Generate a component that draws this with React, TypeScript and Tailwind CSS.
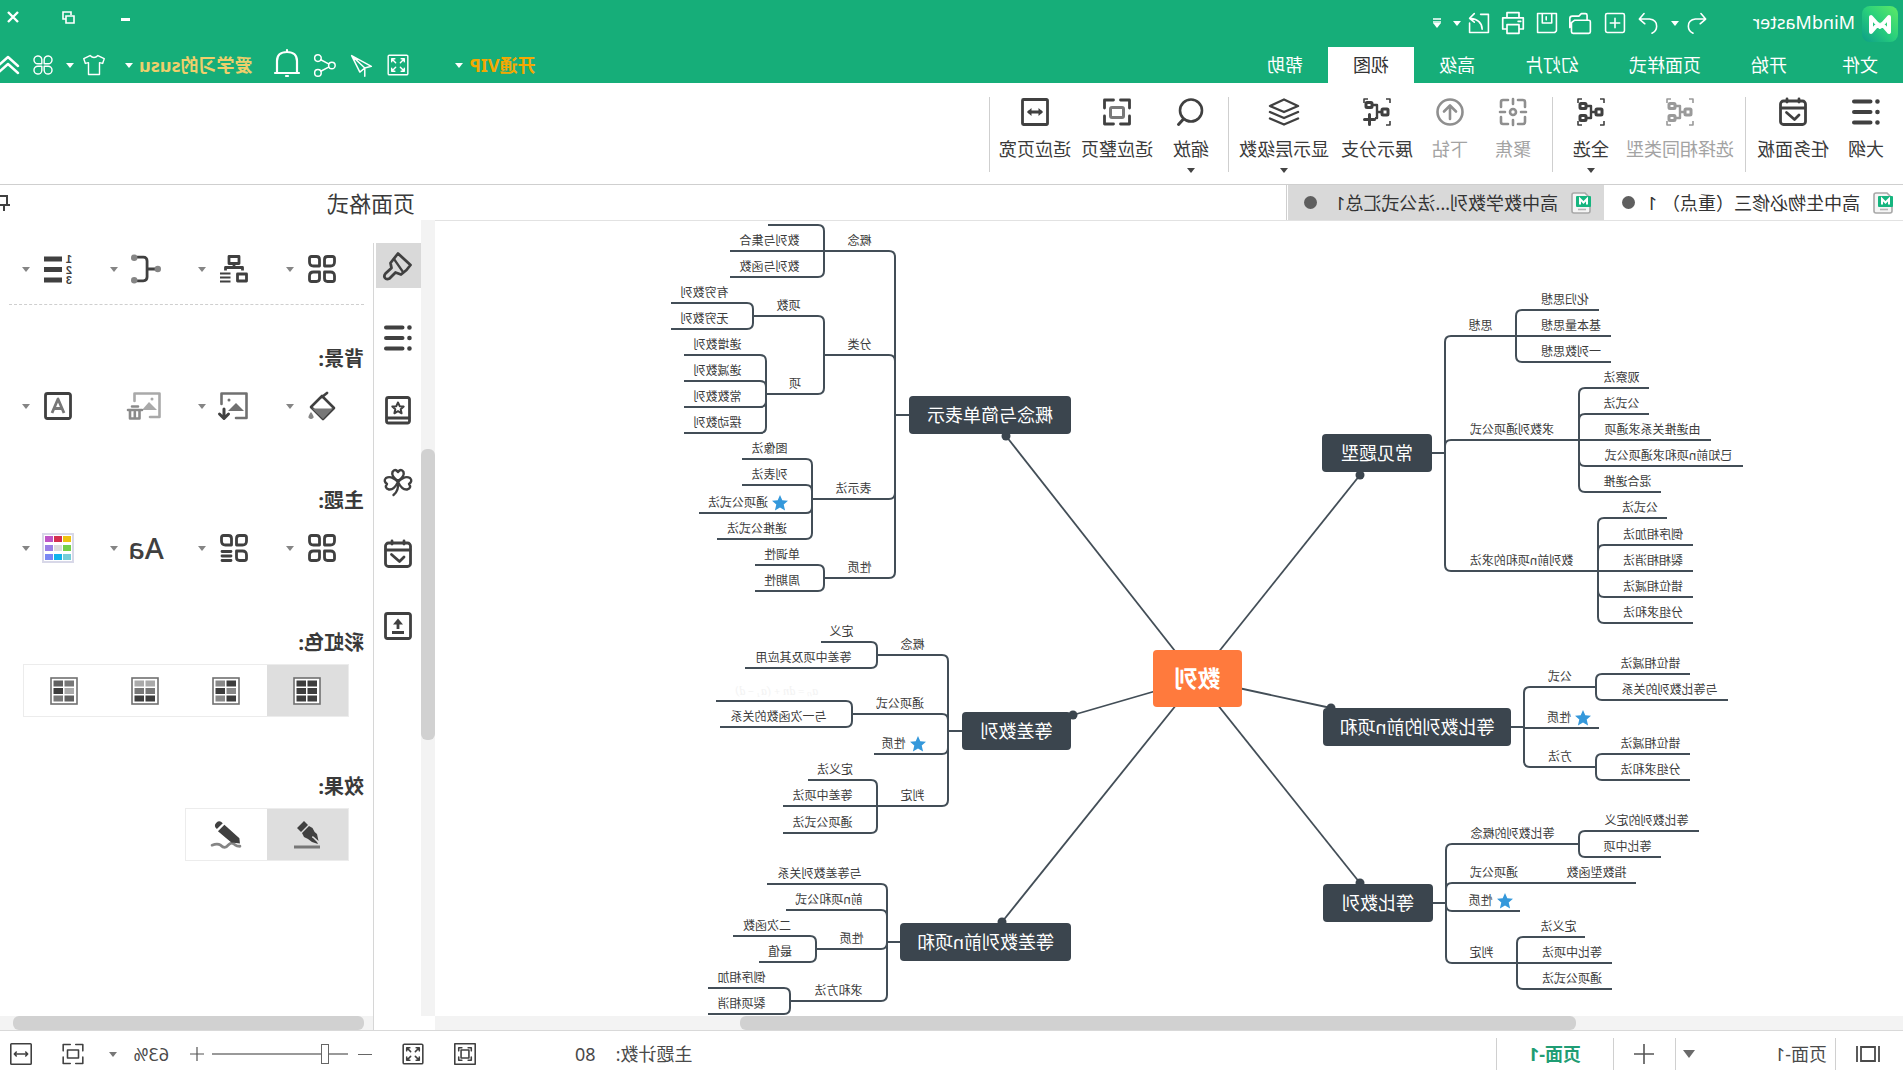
import type { ReactNode } from "react";

const DARK = "#404040";
const LINE = "#434e57";

type IconProps = { children: ReactNode; size?: number; color?: string; width?: number };

// every icon is drawn on a 28 x 28 grid
function Icon({ children, size = 28, color = DARK, width = 2.6 }: IconProps) {
  return (
    <svg
      width={size}
      height={size}
      viewBox="0 0 28 28"
      fill="none"
      stroke={color}
      strokeWidth={width}
      strokeLinecap="round"
      strokeLinejoin="round"
      className="shrink-0 overflow-visible"
      aria-hidden="true"
    >
      {children}
    </svg>
  );
}

function Caret({ className = "text-white" }: { className?: string }) {
  return (
    <svg width="8" height="5" viewBox="0 0 8 5" className={`shrink-0 ${className}`} aria-hidden="true">
      <path d="M0 0h8L4 5z" fill="currentColor" />
    </svg>
  );
}

function Star() {
  return (
    <svg width="16" height="16" viewBox="0 0 16 16" className="shrink-0" aria-hidden="true">
      <path d="M8 0l2.3 5.3 5.7.5-4.3 3.8 1.4 5.9L8 12.5l-5.1 3 1.4-5.9L0 5.8l5.7-.5z" fill="#3498db" />
    </svg>
  );
}

/* ---------- icons ---------- */

const outlineIcon = (
  <Icon width={4}>
    <path d="M9.5 3.5H26M9.5 14H26M9.5 24.5H26" />
    <path d="M2.5 3.5h.1M2.5 14h.1M2.5 24.5h.1" strokeWidth={4.5} />
  </Icon>
);

const taskIcon = (
  <Icon width={2.8}>
    <rect x="1.5" y="3" width="25" height="23.5" rx="3" />
    <path d="M2 10h24M8 1v3M20 1v3M8 17l4.5 4.5 8-7" />
  </Icon>
);

const brackets = <path d="M1 5V1h4M23 1h4v4M1 23v4h4M23 27h4v-4" strokeWidth={1.6} strokeLinecap="butt" />;

const treeIcon = (color: string) => (
  <Icon color={color} width={3}>
    {brackets}
    <rect x="3" y="11" width="6" height="6" rx="1" />
    <rect x="19" y="5.5" width="6" height="5" rx="1" />
    <rect x="19" y="17.5" width="6" height="5" rx="1" />
    <path d="M9 14h5M19 8h-5v12h5" strokeWidth={2.4} />
  </Icon>
);

const focusIcon = (
  <Icon color="#8f8f8f">
    <path d="M2 9V4q0-2 2-2h5M19 2h5q2 0 2 2v5M26 19v5q0 2-2 2h-5M9 26H4q-2 0-2-2v-5" />
    <path d="M14 1v5M14 22v5M1 14h5M22 14h5" />
    <circle cx="14" cy="14" r="3" />
  </Icon>
);

const drillIcon = (
  <Icon color="#8f8f8f">
    <circle cx="14" cy="14" r="12.5" />
    <path d="M14 21V8M8 13.5L14 7.5l6 6" />
  </Icon>
);

const branchIcon = (
  <Icon width={3}>
    <path d="M1 5V1h4M23 1h4v4M1 23v4h4" strokeWidth={1.6} strokeLinecap="butt" />
    <rect x="3" y="11" width="6" height="6" rx="1" />
    <rect x="19" y="4.5" width="6" height="5" rx="1" />
    <path d="M9 14h5M18 7h-4v13h1" strokeWidth={2.4} />
    <path d="M21.5 16.5v10M16.5 21.5h10" />
  </Icon>
);

const layersIcon = (
  <Icon width={2.4}>
    <path d="M14 1.5l14 6.500-14 6L0 8z" />
    <path d="M0 14l14 6 14-6M0 20.5l14 6 14-6" />
  </Icon>
);

const zoomIcon = (
  <Icon>
    <circle cx="14" cy="12.5" r="11" />
    <path d="M21.5 21l5 5.5" strokeWidth={3} />
  </Icon>
);

const corners = <path d="M1.5 10V2h9M17.5 2h9v8M26.5 18v8h-9M10.5 26h-9v-8" />;

const fitPageIcon = (
  <Icon width={2.8}>
    {corners}
    <rect x="7.5" y="9.5" width="13" height="10" rx="1.5" stroke="#7a7a7a" strokeWidth={3} />
  </Icon>
);

const fitWidthIcon = (
  <Icon width={2.8}>
    <rect x="1.5" y="1.5" width="25" height="25" rx="1" />
    <path d="M8 14h12" />
    <path d="M10.5 10v8L6 14zM17.5 10v8l4.500-4z" fill={DARK} stroke="none" />
  </Icon>
);

const petals = (last: ReactNode) => (
  <Icon width={2.8}>
    <path d="M3.5 1.5h5q3 0 3 3v6.5h-6q-4 0-4-4v-3.500q0-2 2-2z" />
    <path d="M24.5 1.5h-5q-3 0-3 3v6.5h6q4 0 4-4v-3.500q0-2-2-2z" />
    <path d="M3.5 26.5h5q3 0 3-3v-6.500h-6q-4 0-4 4v3.500q0 2 2 2z" />
    {last}
  </Icon>
);
const fourPetals = petals(<path d="M24.5 26.5h-5q-3 0-3-3v-6.500h6q4 0 4 4v3.500q0 2-2 2z" />);
const petalsList = petals(<path d="M17 17.5h9M17 22h9M17 26.5h9" />);

const layoutIcon = (
  <Icon width={2.8}>
    <rect x="9" y="1.5" width="10" height="7" />
    <path d="M14 9v4M5.5 15.5v-3h17v3" strokeLinecap="butt" />
    <rect x="1.5" y="19" width="9" height="7" />
    <path d="M17.5 18.5H28M17.5 22.5H28M17.5 26.5H28" strokeWidth={2.2} strokeLinecap="butt" />
  </Icon>
);

const connectorIcon = (
  <Icon size={30}>
    <path d="M4 14h9M22 3h-5.500q-3.500 0-3.500 3.500v15q0 3.500 3.500 3.500H22" />
    <g fill="#858585" stroke="none">
      <circle cx="3" cy="14" r="3" />
      <circle cx="25" cy="3.5" r="3" />
      <circle cx="25" cy="24.5" r="3" />
    </g>
  </Icon>
);

const numberedIcon = (
  <Icon width={5}>
    <path d="M10 4h18M10 14.5h18M10 25h18" strokeLinecap="butt" />
    <g fill={DARK} stroke="none" fontSize="11" fontWeight="700" fontFamily="Liberation Sans">
      <text x="0" y="8">1</text>
      <text x="0" y="18.5">2</text>
      <text x="0" y="29">3</text>
    </g>
  </Icon>
);

const bucketIcon = (
  <Icon width={2.6}>
    <path d="M2 16L14 4l11 11-12 12z" />
    <path d="M9 1l5 4" />
    <path d="M3 16.5h21L13 27z" fill="#777" stroke="none" />
    <path d="M25 20q-3 4-2.500 5.500 2.500 3 5 0Q28 24 25 20z" fill="#858585" stroke="none" />
  </Icon>
);

const pictureIcon = (
  <Icon width={2.6} color="#707070">
    <path d="M12 26H1.500V1.500h25V12" />
    <path d="M4 19l8-8 8 8z" fill="#707070" stroke="none" />
    <circle cx="19" cy="8" r="1.5" fill="#707070" stroke="none" />
    <path d="M24 17v9M19.5 22l4.500 4.500 4.500-4.500" stroke={DARK} strokeWidth={3} />
  </Icon>
);

const pictureDeleteIcon = (
  <Icon width={2.6} color="#a9a9a9">
    <path d="M10 25H0.500V1.500h25V9" />
    <path d="M3 18l8-8 7 8z" fill="#a9a9a9" stroke="none" />
    <circle cx="8" cy="7" r="1.5" fill="#a9a9a9" stroke="none" />
    <path d="M18 18h14M22 14.500h6M20.500 19v7.500h9.500V19M25.200 20v5" stroke="#8a8a8a" />
  </Icon>
);

const watermarkIcon = (
  <Icon width={2.8}>
    <rect x="1.5" y="1.5" width="25" height="25" rx="2" />
    <path d="M8 21l6-14 6 14M10 16.5h8" stroke="#777" strokeLinecap="butt" />
  </Icon>
);

const paletteColors = ["#efc210", "#d4304f", "#bf55c6", "#75cf49", "#dcdcdc", "#9a7fe6", "#74cdd8", "#10b4ec", "#7a88f4"];
const paletteIcon = (
  <svg width="32" height="30" viewBox="0 0 32 30" className="shrink-0" aria-hidden="true">
    <rect x="1" y="1" width="30" height="28" fill="#fff" stroke="#d8d8e8" strokeWidth="2" />
    {paletteColors.map((c, i) => (
      <rect key={c} x={3 + (i % 3) * 9} y={3 + Math.floor(i / 3) * 9} width="8" height="6" fill={c} />
    ))}
  </svg>
);

const brushIcon = (
  <Icon width={2.8}>
    <path d="M14 1.5L1.500 13l4 5 5.500 4.500 5.500-2 6 6q3 1.500 4.500-.5t-.5-4.500l-6-5.500 1-5z" />
    <path d="M18 7L9 20" strokeWidth={2.2} />
  </Icon>
);

const bookIcon = (
  <Icon width={2.8}>
    <rect x="2.5" y="1.5" width="23" height="25.5" rx="2" />
    <path d="M3 22h22" />
    <path d="M14 6.500l1.700 3.700 4 .4-3 2.700.9 4L14 15.200l-3.600 2.100.9-4-3-2.700 4-.4z" strokeWidth={2} />
  </Icon>
);

const cloverIcon = (
  <Icon width={2.4}>
    <path d="M14 13Q7 8 8.500 4 11 0 14 4q3-4 5.500 0Q21 8 14 13z" />
    <path d="M14 14Q10 22 5 21.500 0 20 3 16q-4-3-1-6 5-3 12 4z" />
    <path d="M14 14q4 8 9 7.500 5-1.500 2-5.500 4-3 1-6-5-3-12 4z" />
    <path d="M14 14q-1 9 4.500 13" />
  </Icon>
);

const exportIcon = (
  <Icon width={2.8}>
    <rect x="1.5" y="1.5" width="25" height="25" rx="2" />
    <path d="M8 20.5h12M14 17v-6" strokeLinecap="butt" />
    <path d="M9 12.500L14 6.500l5 6z" fill={DARK} stroke="none" />
  </Icon>
);

function GridIcon({ cells }: { cells: string[] }) {
  return (
    <svg width="28" height="28" viewBox="0 0 28 28" aria-hidden="true">
      <rect x="1" y="1" width="26" height="26" fill="#fff" stroke="#707070" strokeWidth="1.6" />
      {cells.map((c, i) => (
        <rect key={i} x={i % 2 ? 15 : 4} y={3.5 + Math.floor(i / 2) * 7.5} width="9.5" height="6" fill={c} />
      ))}
    </svg>
  );
}

const penIcon = (
  <Icon width={3}>
    <path d="M1 26h26" stroke="#777" strokeLinecap="butt" />
    <path d="M17 0l7 7-4 4-7-7zM12 5l7 7-2 4q-5 2-8 5l-6 2 1-2 4-4q1 0 1-1t-1.500-.500L2.500 20 4 13q3-2 4.500-6z" fill={DARK} stroke="none" />
  </Icon>
);

const pencilIcon = (
  <Icon size={30}>
    <path d="M1 24.500q3 0 4-1 4-4 7 0t7 0q3-2 8 0" stroke="#858585" />
    <path d="M17 3q3-3.500 6-.5t-.5 6zM15.500 4.500l6 6L9 21 1 22l.500-5z" fill={DARK} stroke="none" />
  </Icon>
);

const fullscreenIcon = (color: string, width: number) => (
  <Icon size={22} color={color} width={width}>
    <rect x="1.5" y="1.5" width="25" height="25" rx="1.5" />
    <path d="M6 10V6h4M6 6l5 5M18 6h4v4M22 6l-5 5M22 18v4h-4M22 22l-5-5M10 22H6v-4M6 22l5-5" />
  </Icon>
);

/* ---------- title bar ---------- */

const iconButton = "flex h-7 items-center justify-center";

function TitleBar() {
  return (
    <div className="flex h-[47px] items-start text-white">
      <div className="ml-[5px] mt-[6px] flex items-center">
        <svg width="36" height="36" viewBox="0 0 36 36" aria-hidden="true">
          <defs>
            <linearGradient id="logo" x1="0" y1="0" x2="1" y2="1">
              <stop offset="0" stopColor="#5eea66" />
              <stop offset="0.5" stopColor="#28cf7c" />
              <stop offset="1" stopColor="#0d9d88" />
            </linearGradient>
          </defs>
          <rect width="36" height="36" rx="8" fill="url(#logo)" />
          <path d="M9 26V11l9 10 9-10v15l-7-8M9 26l7-8" fill="none" stroke="#fff" strokeWidth="4" strokeLinecap="round" strokeLinejoin="round" />
        </svg>
        <span className="ml-[7px] mb-1 w-[105px] text-lg leading-7">MindMaster</span>
      </div>

      <div className="ml-[42px] mt-[9px] flex items-center">
        <button aria-label="撤销" className={iconButton}>
          <Icon size={22} color="#fff" width={2}>
            <path d="M9 2L3 9l7 6M3 9h13q9 1 9 9 0 6-6 9" />
          </Icon>
        </button>
        <button aria-label="撤销记录" className={`${iconButton} ml-[7px]`}><Caret /></button>
        <button aria-label="恢复" className={`${iconButton} ml-3`}>
          <Icon size={22} color="#fff" width={2}>
            <path d="M19 2l6 7-7 6M25 9H12q-9 1-9 9 0 6 6 9" />
          </Icon>
        </button>
        <button aria-label="新建" className={`${iconButton} ml-[11px]`}>
          <Icon size={22} color="#fff" width={2}>
            <rect x="2" y="2" width="24" height="24" rx="2" />
            <path d="M14 8v12M8 14h12" />
          </Icon>
        </button>
        <button aria-label="打开" className={`${iconButton} ml-3`}>
          <Icon size={23} color="#fff" width={2}>
            <path d="M2 24V12q0-2 2-2h17l4 3v11q0 2-2 2H4q-2 0-2-2zM6 10V4q0-2 2-2h5l3 3h8q3 0 3 3v11" />
          </Icon>
        </button>
        <button aria-label="保存" className={`${iconButton} ml-[11px]`}>
          <Icon size={22} color="#fff" width={2}>
            <path d="M2 2h24v24H4l-2-2zM8 2v12h12V2M15 6v4" />
          </Icon>
        </button>
        <button aria-label="打印" className={`${iconButton} ml-[11px]`}>
          <Icon size={24} color="#fff" width={2}>
            <path d="M7 8V2h14v6M7 21H2V8h24v13h-5M7 16h14v10H7zM5 12h3" />
          </Icon>
        </button>
        <button aria-label="导出" className={`${iconButton} ml-[11px]`}>
          <Icon size={22} color="#fff" width={2}>
            <path d="M12 3H2v23h24V14M10 22q0-12 15-14M20 2l6 6-6 5" />
          </Icon>
        </button>
        <button aria-label="导出选项" className={`${iconButton} ml-[7px]`}><Caret /></button>
        <button aria-label="自定义快速访问" className={`${iconButton} ml-3`}>
          <svg width="8" height="10" viewBox="0 0 8 10" aria-hidden="true">
            <path d="M0 1h8M0 4h8" stroke="#fff" strokeWidth="1.4" />
            <path d="M0 5h8L4 10z" fill="#fff" />
          </svg>
        </button>
      </div>

      <div className="ml-auto mr-[7px] mt-[3px] flex items-center gap-[43px]">
        <button aria-label="最小化" className="flex h-7 w-3 items-center">
          <span className="mt-1 h-[3px] w-[9px] bg-white" />
        </button>
        <button aria-label="还原" className={iconButton}>
          <svg width="13" height="13" viewBox="0 0 13 13" fill="none" stroke="#fff" strokeWidth="1.6" aria-hidden="true">
            <path d="M4 4V1h8v7H9M1 5h8v7H1z" />
          </svg>
        </button>
        <button aria-label="关闭" className={iconButton}>
          <svg width="12" height="12" viewBox="0 0 12 12" stroke="#fff" strokeWidth="2.4" aria-hidden="true">
            <path d="M1 1l10 10M11 1L1 11" />
          </svg>
        </button>
      </div>
    </div>
  );
}

const menus = ["文件", "开始", "页面样式", "幻灯片", "高级", "视图", "帮助"];

function MenuBar() {
  return (
    <div className="flex h-9 items-center text-lg text-white">
      <nav className="flex h-full">
        {menus.map((m) => (
          <button
            key={m}
            className={`h-full px-[25px] leading-9 whitespace-nowrap first:mr-[5px] ${m === "视图" ? "bg-white text-[#333]" : ""}`}
          >
            {m}
          </button>
        ))}
      </nav>
      <div className="-mr-[2px] ml-auto flex items-center">
        <button className="flex items-center gap-[6px] font-bold text-[#f5a800]">
          开通VIP <Caret />
        </button>
        <button aria-label="全屏" className="ml-[46px]">{fullscreenIcon("#fff", 1.8)}</button>
        <button aria-label="发送" className="ml-[14px]">
          <Icon size={23} color="#fff" width={1.8}>
            <path d="M26 2L2 15l8 2 6 5zM26 2L10 17v10" />
          </Icon>
        </button>
        <button aria-label="分享" className="ml-[14px]">
          <Icon size={23} color="#fff" width={1.8}>
            <circle cx="5" cy="14" r="4" />
            <circle cx="22" cy="5" r="4" />
            <circle cx="22" cy="23" r="4" />
            <path d="M9 12l9.500-5M9 16l9.500 5" />
          </Icon>
        </button>
        <button aria-label="通知" className="ml-3 mb-1">
          <Icon size={28} color="#fff" width={2.2}>
            <path d="M4 24V12q0-9 10-9t10 9v12M2 24h24M14 1v2M13 27h2" />
          </Icon>
        </button>
        <button className="ml-[21px] flex items-center gap-[6px] font-bold text-[#efcf6b]">
          爱学习的susu <Caret />
        </button>
        <button aria-label="皮肤" className="ml-5">
          <Icon size={22} color="#fff" width={1.8}>
            <path d="M9 2q5 5 10 0l8 4-2 6-4-1v15H7V11l-4 1-2-6z" />
          </Icon>
        </button>
        <button aria-label="皮肤选项" className="ml-[9px]"><Caret /></button>
        <button aria-label="应用" className="ml-3">
          <Icon size={22} color="#fff" width={1.8}>
            <path d="M12.500 12.500V7a5 5 0 1 0-5 5.500zM15.500 12.500V7a5 5 0 1 1 5 5.500zM12.500 15.500V21a5 5 0 1 1-5-5.500zM15.500 15.500V21a5 5 0 1 0 5-5.500z" />
          </Icon>
        </button>
        <button aria-label="收起功能区" className="ml-3">
          <svg width="22" height="20" viewBox="0 0 22 20" fill="none" stroke="#fff" strokeWidth="2.4" strokeLinecap="round" strokeLinejoin="round" aria-hidden="true">
            <path d="M2 11l10-9 10 9M2 18l10-9 10 9" />
          </svg>
        </button>
      </div>
    </div>
  );
}

/* ---------- ribbon ---------- */

type Tool = { label: string; icon: ReactNode; width: string; disabled?: boolean; menu?: boolean };

const toolGroups: { pad: string; tools: Tool[] }[] = [
  {
    pad: "pr-[11px]",
    tools: [
      { label: "大纲", icon: outlineIcon, width: "w-[74px]" },
      { label: "任务面板", icon: taskIcon, width: "w-[72px]" },
    ],
  },
  {
    pad: "pl-[11px] pr-[3px]",
    tools: [
      { label: "选择相同类型", icon: treeIcon("#9a9a9a"), width: "w-[108px]", disabled: true },
      { label: "全选", icon: treeIcon(DARK), width: "w-[70px]", menu: true },
    ],
  },
  {
    pad: "pr-[11px]",
    tools: [
      { label: "聚焦", icon: focusIcon, width: "w-[78px]", disabled: true },
      { label: "下钻", icon: drillIcon, width: "w-12", disabled: true },
      { label: "展示分支", icon: branchIcon, width: "w-[98px]" },
      { label: "显示层级数", icon: layersIcon, width: "w-[88px]", menu: true },
    ],
  },
  {
    pad: "",
    tools: [
      { label: "缩放", icon: zoomIcon, width: "w-[74px]", menu: true },
      { label: "适应整页", icon: fitPageIcon, width: "w-[74px]" },
      { label: "适应页宽", icon: fitWidthIcon, width: "w-[90px]" },
    ],
  },
];

function Ribbon() {
  return (
    <div className="flex h-[102px] items-start border-b border-[#cfcfcf] bg-white pt-[14px]">
      {toolGroups.map((g, i) => (
        <div key={i} className={`flex h-[75px] items-start border-r border-[#cfcfcf] ${g.pad}`}>
          {g.tools.map((t) => (
            <button
              key={t.label}
              disabled={t.disabled}
              className={`flex shrink-0 flex-col items-center pt-[1px] text-lg whitespace-nowrap ${t.width} ${t.disabled ? "text-[#a3a3a3]" : "text-[#3a3a3a]"}`}
            >
              {t.icon}
              <span className="mt-[9px] leading-7">{t.label}</span>
              {t.menu && <Caret className="mt-[5px] text-[#444]" />}
            </button>
          ))}
        </div>
      ))}
    </div>
  );
}

/* ---------- document tabs ---------- */

function DocIcon() {
  return (
    <svg width="20" height="22" viewBox="0 0 20 22" className="shrink-0" aria-hidden="true">
      <path d="M6 1h11q2 0 2 2v16q0 2-2 2H3q-2 0-2-2V6z" fill="#f5f5f5" stroke="#a8a8a8" strokeWidth="1.6" />
      <path d="M5 17.5h8" stroke="#b5b5b5" strokeWidth="1.6" />
      <rect y="4" width="15" height="11" rx="1" fill="#16b57f" />
      <path d="M4 12.500V7l3.500 3.500L11 7v5.500" fill="none" stroke="#fff" strokeWidth="2" />
    </svg>
  );
}

function DocTabs() {
  return (
    <div className="flex h-[35px] text-lg text-[#333]">
      <button className="flex w-[299px] items-center pl-[10px] whitespace-pre">
        <DocIcon />
        <span className="ml-[13px] w-[225px] text-left">高中生物必修三（重点） 1</span>
        <span className="size-[13px] rounded-full bg-[#5f5f5f]" />
      </button>
      <button className="flex w-[316px] items-center bg-[#d9d9d9] pl-[13px] whitespace-pre">
        <DocIcon />
        <span className="ml-[13px] w-[241px] text-left">高中数学数列...法公式汇总1</span>
        <span className="size-[13px] rounded-full bg-[#5f5f5f]" />
      </button>
      <span className="ml-[1px] border-r border-[#cfcfcf]" />
    </div>
  );
}

/* ---------- mind map ---------- */

// x is where the underline ends; a node with children ends on their spine
type Topic = { t: string; y: number; x: number; star?: boolean; faint?: boolean; kids?: Topic[] };

type Branch = { t: string; x: number; w: number; y: number; spine: number; dot: [number, number]; kids: Topic[] };

const leaf = (t: string, y: number, x: number): Topic => ({ t, y, x });

const branches: Branch[] = [
  {
    t: "常见题型", x: 471, w: 110, y: 213, spine: 458, dot: [543, 254],
    kids: [
      { t: "思想", y: 115, x: 387, kids: [leaf("化归思想", 89, 304), leaf("基本量思想", 115, 292), leaf("一列数思想", 141, 292)] },
      {
        t: "求数列通项公式", y: 219, x: 324,
        kids: [
          leaf("观察法", 167, 254),
          leaf("公式法", 193, 254),
          leaf("由递推关系求通项", 219, 192),
          leaf("已知前n项和求通项公式", 245, 160),
          leaf("混合递推", 271, 242),
        ],
      },
      {
        t: "数列前n项和的求法", y: 350, x: 305,
        kids: [
          leaf("公式法", 297, 236),
          leaf("倒序相加法", 324, 210),
          leaf("裂相相消法", 350, 210),
          leaf("错位相减法", 376, 210),
          leaf("分组求和法", 402, 210),
        ],
      },
    ],
  },
  {
    t: "等比数列的前n项和", x: 392, w: 188, y: 487, spine: 379, dot: [572, 487],
    kids: [
      { t: "公式", y: 466, x: 307, kids: [leaf("错位相减法", 453, 213), leaf("与等比数列的关系", 479, 175)] },
      { t: "性质", y: 507, x: 304, star: true },
      { t: "方法", y: 546, x: 307, kids: [leaf("错位相减法", 533, 213), leaf("分组求和法", 559, 213)] },
    ],
  },
  {
    t: "等比数列", x: 470, w: 110, y: 663, spine: 457, dot: [543, 662],
    kids: [
      { t: "等比数列的概念", y: 623, x: 324, kids: [leaf("等比数列的定义", 610, 204), leaf("等比中项", 636, 242)] },
      { t: "通项公式", y: 662, x: 361, kids: [leaf("指数型函数", 662, 267)] },
      { t: "性质", y: 690, x: 383, star: true },
      { t: "判定", y: 742, x: 386, kids: [leaf("定义法", 716, 318), leaf("等比中项法", 742, 291), leaf("通项公式法", 768, 291)] },
    ],
  },
  {
    t: "概念与简单表示", x: 832, w: 162, y: 175, spine: 1008, dot: [897, 215],
    kids: [
      { t: "概念", y: 30, x: 1079, kids: [leaf("", 4, 1135), leaf("数列与集合", 30, 1173), leaf("数列与函数", 56, 1173)] },
      {
        t: "分类", y: 134, x: 1079,
        kids: [
          { t: "项数", y: 95, x: 1150, kids: [leaf("有穷数列", 82, 1232), leaf("无穷数列", 108, 1232)] },
          {
            t: "项", y: 173, x: 1137,
            kids: [leaf("递增数列", 134, 1219), leaf("递减数列", 160, 1219), leaf("常数数列", 186, 1219), leaf("摆动数列", 212, 1219)],
          },
        ],
      },
      {
        t: "表示法", y: 278, x: 1091,
        kids: [
          leaf("图像法", 238, 1161),
          leaf("列表法", 264, 1161),
          { t: "通项公式法", y: 292, x: 1204, star: true },
          leaf("递推公式法", 318, 1186),
        ],
      },
      { t: "性质", y: 357, x: 1079, kids: [leaf("单调性", 344, 1148), leaf("周期性", 370, 1148)] },
    ],
  },
  {
    t: "等差数列", x: 832, w: 109, y: 491, spine: 955, dot: [830, 494],
    kids: [
      { t: "概念", y: 434, x: 1026, kids: [leaf("定义", 421, 1082), leaf("等差中项及其应用", 447, 1158)] },
      {
        t: "通项公式", y: 493, x: 1051,
        kids: [{ t: "aₙ = dn + (a₁ − d)", y: 480, x: 1187, faint: true }, leaf("与一次函数的关系", 506, 1183)],
      },
      { t: "性质", y: 533, x: 1029, star: true },
      { t: "判定", y: 585, x: 1026, kids: [leaf("定义法", 559, 1095), leaf("等差中项法", 585, 1120), leaf("通项公式法", 612, 1120)] },
    ],
  },
  {
    t: "等差数列前n项和", x: 832, w: 171, y: 702, spine: 1016, dot: [901, 701],
    kids: [
      leaf("与等差数列关系", 663, 1136),
      leaf("前n项和公式", 689, 1117),
      { t: "性质", y: 728, x: 1087, kids: [leaf("二次函数", 715, 1170), leaf("最值", 741, 1144)] },
      { t: "求和方法", y: 780, x: 1113, kids: [leaf("倒序相加", 767, 1195), leaf("裂项相消", 793, 1195)] },
    ],
  },
];

const CENTER = { x: 706, y: 458 };
const GAP = 15;

// rounded elbow from a spine to the end of an underline
function elbow(spine: number, fromY: number, node: Topic) {
  const dir = node.x > spine ? 1 : -1;
  const dy = node.y - fromY;
  if (Math.abs(dy) < 3) return `M${spine} ${node.y}H${node.x}`;
  const r = 6;
  const s = Math.sign(dy);
  return `M${spine} ${fromY}V${node.y - s * r}Q${spine} ${node.y} ${spine + dir * r} ${node.y}H${node.x}`;
}

function collectPaths(kids: Topic[], spine: number, fromY: number): string[] {
  return kids.flatMap((k) => [elbow(spine, fromY, k), ...collectPaths(k.kids ?? [], k.x, k.y)]);
}

function TopicLabels({ kids, spine }: { kids: Topic[]; spine: number }) {
  return (
    <>
      {kids.map((k, i) => {
        const dir = k.x > spine ? 1 : -1;
        const a = spine + dir * GAP;
        const b = k.kids ? k.x - dir * GAP : k.x;
        return (
          <div key={i}>
            <div
              className={`absolute flex h-5 items-center justify-center gap-1 text-xs whitespace-nowrap ${k.faint ? "font-serif text-sm italic text-[#f3f3f3]" : "text-[#3c3c3c]"}`}
              style={{ left: Math.min(a, b), width: Math.abs(b - a), top: k.y - 20 }}
            >
              {k.star && <Star />}
              {k.t}
            </div>
            {k.kids && <TopicLabels kids={k.kids} spine={k.x} />}
          </div>
        );
      })}
    </>
  );
}

function MindMap() {
  return (
    <div className="relative min-h-0 flex-1 overflow-hidden border-t border-[#e2e2e2] bg-white">
      <svg className="absolute inset-0 h-full w-full" fill="none" stroke={LINE} strokeWidth="2" aria-hidden="true">
        {branches.map((b) => {
          const mid = b.y + 19;
          const edge = b.spine > b.x ? b.x + b.w : b.x;
          return (
            <g key={b.t}>
              <path d={`M${CENTER.x} ${CENTER.y}L${b.dot[0]} ${b.dot[1]}`} strokeWidth="1.8" />
              <circle cx={b.dot[0]} cy={b.dot[1]} r="4.5" fill="#3b454e" stroke="none" />
              <path d={`M${edge} ${mid}H${b.spine}`} />
              {collectPaths(b.kids, b.spine, mid).map((d, i) => (
                <path key={i} d={d} />
              ))}
            </g>
          );
        })}
      </svg>
      {branches.map((b) => (
        <div key={b.t}>
          <div
            className="absolute flex h-[38px] items-center justify-center rounded bg-[#3b454e] text-lg whitespace-nowrap text-white"
            style={{ left: b.x, top: b.y, width: b.w }}
          >
            {b.t}
          </div>
          <TopicLabels kids={b.kids} spine={b.spine} />
        </div>
      ))}
      <div className="absolute top-[429px] left-[661px] flex h-[57px] w-[89px] items-center justify-center rounded bg-[#ff7a3d] text-[23px] font-bold text-white">
        数列
      </div>
    </div>
  );
}

/* ---------- side panel ---------- */

const sideIcons: { label: string; icon: ReactNode }[] = [
  { label: "页面格式", icon: brushIcon },
  { label: "大纲", icon: outlineIcon },
  { label: "图标", icon: bookIcon },
  { label: "剪贴画", icon: cloverIcon },
  { label: "任务", icon: taskIcon },
  { label: "导出", icon: exportIcon },
];

type Option = { label: string; icon: ReactNode; plain?: boolean };

function OptionRow({ options }: { options: Option[] }) {
  return (
    <div className="flex h-8 pl-6">
      {options.map((o) => (
        <button key={o.label} aria-label={o.label} className="flex w-[88px] shrink-0 items-center">
          <span className="flex w-9 justify-center">{o.icon}</span>
          {!o.plain && <Caret className="ml-[10px] text-[#858585]" />}
        </button>
      ))}
    </div>
  );
}

function Segment({ items }: { items: { label: string; icon: ReactNode }[] }) {
  return (
    <div className="ml-6 flex h-[53px] w-fit border border-[#ececec]">
      {items.map((s, i) => (
        <button
          key={s.label}
          aria-label={s.label}
          aria-pressed={i === 0}
          className={`flex w-[81px] items-center justify-center ${i === 0 ? "bg-[#dedede]" : ""}`}
        >
          {s.icon}
        </button>
      ))}
    </div>
  );
}

const D = "#3d3d3d";
const rainbow = [
  { label: "单色", icon: <GridIcon cells={[D, D, D, D, D, D]} /> },
  { label: "交错", icon: <GridIcon cells={[D, "#888", "#888", D, D, "#888"]} /> },
  { label: "渐变", icon: <GridIcon cells={["#aaa", "#aaa", "#777", "#777", D, D]} /> },
  { label: "多彩", icon: <GridIcon cells={["#777", "#606060", "#aaa", D, "#606060", "#777"]} /> },
];

const heading = "text-xl leading-7 font-bold text-[#3a3a3a]";

function SidePanel() {
  return (
    <aside className="flex w-[421px] shrink-0 flex-col overflow-hidden">
      <div className="flex h-[58px] items-start justify-between pl-[6px]">
        <h2 className="pt-[2px] text-[22px] leading-8 text-[#3a3a3a]">页面格式</h2>
        <button aria-label="固定" className="mt-2">
          <svg width="10" height="20" viewBox="0 0 10 20" fill="none" stroke={DARK} strokeWidth="2" aria-hidden="true">
            <path d="M10 3H3v9M0 12h10M6 12v6" />
          </svg>
        </button>
      </div>
      <div className="flex min-h-0 flex-1">
        <div className="flex w-12 shrink-0 flex-col gap-[27px] border-r border-[#d6d6d6]">
          {sideIcons.map((s, i) => (
            <button
              key={s.label}
              aria-label={s.label}
              className={`flex size-[45px] items-center justify-center ${i === 0 ? "bg-[#d9d9d9]" : ""}`}
            >
              {s.icon}
            </button>
          ))}
        </div>
        <div className="flex min-w-0 flex-1 flex-col">
          <div className="flex-1 pl-[9px]">
            <div className="mr-[9px] h-[62px] border-b border-dashed border-[#cfcfcf] pt-[10px]">
              <OptionRow
                options={[
                  { label: "布局", icon: fourPetals },
                  { label: "结构", icon: layoutIcon },
                  { label: "连接线样式", icon: connectorIcon },
                  { label: "编号", icon: numberedIcon },
                ]}
              />
            </div>
            <h3 className={`${heading} mt-10`}>背景:</h3>
            <div className="mt-[17px]">
              <OptionRow
                options={[
                  { label: "背景颜色", icon: bucketIcon },
                  { label: "背景图片", icon: pictureIcon },
                  { label: "删除背景", icon: pictureDeleteIcon, plain: true },
                  { label: "水印", icon: watermarkIcon },
                ]}
              />
            </div>
            <h3 className={`${heading} mt-[65px]`}>主题:</h3>
            <div className="mt-[17px]">
              <OptionRow
                options={[
                  { label: "主题", icon: fourPetals },
                  { label: "主题样式", icon: petalsList },
                  { label: "字体", icon: <span className="text-[29px] leading-8 font-medium text-[#404040]">Aa</span> },
                  { label: "配色", icon: paletteIcon },
                ]}
              />
            </div>
            <h3 className={`${heading} mt-[65px]`}>彩虹色:</h3>
            <div className="mt-[7px] -ml-[9px]">
              <Segment items={rainbow} />
            </div>
            <h3 className={`${heading} mt-14`}>效果:</h3>
            <div className="mt-[7px] -ml-[9px]">
              <Segment items={[{ label: "普通", icon: penIcon }, { label: "手绘", icon: pencilIcon }]} />
            </div>
          </div>
          <div className="h-[14px] bg-[#f3f3f3]">
            <div className="mr-[13px] ml-[9px] h-full rounded-[6px] bg-[#d1d1d1]" />
          </div>
        </div>
      </div>
    </aside>
  );
}

/* ---------- status bar ---------- */

function StatusBar() {
  return (
    <footer className="flex h-[42px] shrink-0 items-center border-t border-[#d9d9d9] bg-white pt-[5px] text-lg text-[#4a4a4a]">
      <button aria-label="页面视图" className="ml-[23px]">
        <svg width="24" height="18" viewBox="0 0 24 18" fill="none" stroke="#4a4a4a" strokeWidth="1.8" aria-hidden="true">
          <path d="M1 1v16M23 1v16M5 2h14v14H5z" />
        </svg>
      </button>
      <span className="ml-5 h-8 w-px bg-[#d0d0d0]" />
      <div className="relative h-8 w-[159px]">
        <select aria-label="页面" className="h-full w-full appearance-none pl-2 leading-8">
          <option>页面-1</option>
        </select>
        <svg width="12" height="8" viewBox="0 0 12 8" className="pointer-events-none absolute top-3 right-[7px]" aria-hidden="true">
          <path d="M0 0h12L6 8z" fill="#6a6a6a" />
        </svg>
      </div>
      <span className="h-8 w-px bg-[#d0d0d0]" />
      <button aria-label="添加页面" className="flex h-8 w-[61px] items-center justify-center">
        <svg width="20" height="20" viewBox="0 0 20 20" stroke="#555" strokeWidth="1.6" aria-hidden="true">
          <path d="M10 0v20M0 10h20" />
        </svg>
      </button>
      <span className="h-8 w-px bg-[#d0d0d0]" />
      <button className="h-8 w-[116px] leading-8 font-bold text-[#1f9d74]">页面-1</button>
      <span className="h-8 w-px bg-[#d0d0d0]" />

      <div className="ml-auto flex items-center">
        <span>主题计数:</span>
        <span className="ml-5">80</span>
        <button aria-label="适应窗口" className="ml-[99px]">
          <Icon size={22} width={2}>
            <rect x="1" y="1" width="26" height="26" />
            <path d="M6 10V6h4M18 6h4v4M22 18v4h-4M10 22H6v-4M9 9h10v10H9z" />
          </Icon>
        </button>
        <button aria-label="全屏显示" className="ml-[30px]">{fullscreenIcon(DARK, 2)}</button>
        <button aria-label="缩小" className="ml-[30px] h-8 w-[14px]">
          <span className="block h-px bg-[#666]" />
        </button>
        <input
          type="range"
          aria-label="缩放比例"
          min={0}
          max={400}
          defaultValue={60}
          className="ml-[10px] h-5 w-[136px] appearance-none bg-transparent [&::-webkit-slider-runnable-track]:h-[2px] [&::-webkit-slider-runnable-track]:bg-[#999] [&::-webkit-slider-thumb]:-mt-[9px] [&::-webkit-slider-thumb]:h-5 [&::-webkit-slider-thumb]:w-2 [&::-webkit-slider-thumb]:appearance-none [&::-webkit-slider-thumb]:border [&::-webkit-slider-thumb]:border-solid [&::-webkit-slider-thumb]:border-[#666] [&::-webkit-slider-thumb]:bg-white"
        />
        <button aria-label="放大" className="ml-2">
          <svg width="14" height="14" viewBox="0 0 14 14" stroke="#555" strokeWidth="1.2" aria-hidden="true">
            <path d="M7 0v14M0 7h14" />
          </svg>
        </button>
        <button className="ml-[21px] flex w-[60px] items-center justify-between">
          63% <Caret className="text-[#777]" />
        </button>
        <button aria-label="适应整页" className="ml-[25px]">
          <Icon size={22} width={2}>
            {corners}
            <rect x="7" y="9" width="14" height="10" />
          </Icon>
        </button>
        <button aria-label="适应页宽" className="mr-[10px] ml-[30px]">
          <Icon size={22} width={2}>
            <rect x="1" y="1" width="26" height="26" rx="1" />
            <path d="M6 14h16M8 11.500L5.500 14 8 16.500M20 11.500l2.500 2.500-2.500 2.500" />
          </Icon>
        </button>
      </div>
    </footer>
  );
}

function App() {
  return (
    <div className="flex h-screen w-full -scale-x-100 flex-col overflow-hidden bg-white font-['Noto_Sans','Noto_Sans_CJK_SC',sans-serif]">
      <header className="shrink-0 bg-[#16ae79]">
        <TitleBar />
        <MenuBar />
        <Ribbon />
      </header>
      <main className="flex min-h-0 flex-1">
        <div className="flex min-w-0 flex-1 flex-col">
          <DocTabs />
          <div className="flex min-h-0 flex-1">
            <div className="flex min-w-0 flex-1 flex-col">
              <MindMap />
              <div className="h-[14px] shrink-0 bg-[#f3f3f3]">
                <div className="ml-[327px] h-full w-[836px] rounded-[6px] bg-[#d1d1d1]" />
              </div>
            </div>
            <div className="mb-[14px] w-[14px] shrink-0 bg-[#f3f3f3]">
              <div className="mt-[229px] h-[291px] rounded-[6px] bg-[#d1d1d1]" />
            </div>
          </div>
        </div>
        <SidePanel />
      </main>
      <StatusBar />
    </div>
  );
}

export default App;
